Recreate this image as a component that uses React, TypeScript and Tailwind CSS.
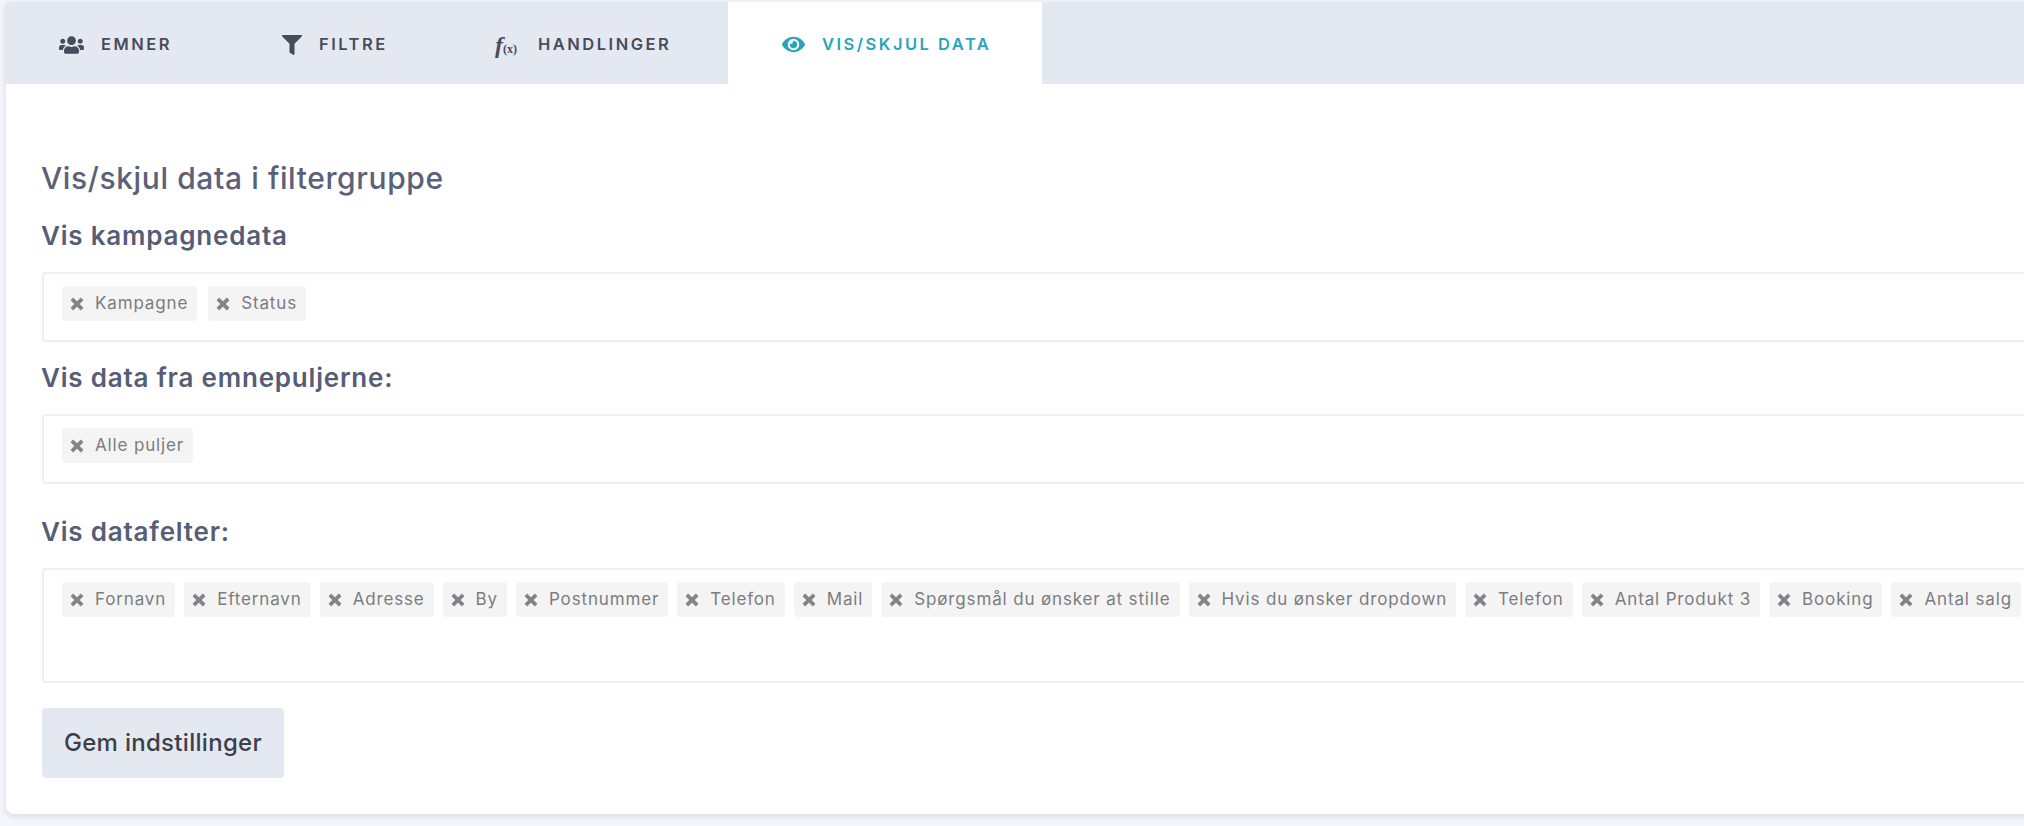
import { FaUsers, FaFilter, FaEye } from "react-icons/fa";

function Chip({ label }: { label: string }) {
  return (
    <span className="flex h-[35px] shrink-0 items-center gap-[10px] rounded-[4px] bg-[#f4f4f4] pl-[7px] pr-[9px] text-[17px] tracking-[0.85px] text-[#7c7c80]">
      <svg viewBox="0 0 14 14" className="h-[16px] w-[16px] text-[#848488]" fill="none" stroke="currentColor" strokeWidth="3.2">
        <path d="M2.5 2.5L11.5 11.5M11.5 2.5L2.5 11.5" />
      </svg>
      {label}
    </span>
  );
}

function Field({ h, gap, chips }: { h: string; gap: string; chips: string[] }) {
  return (
    <div className={`flex items-start rounded-[4px] border-2 border-[#eeeff2] bg-white pl-[18px] pt-[12px] ${gap} ${h}`}>
      {chips.map((c, i) => (
        <Chip key={i} label={c} />
      ))}
    </div>
  );
}

function Tab({ icon, label, w, active }: { icon: React.ReactNode; label: string; w: string; active?: boolean }) {
  return (
    <div className={`flex h-full items-center pt-[3px] ${w} ${active ? "bg-white text-[#27a5bd]" : "text-[#474b5a]"}`}>
      {icon}
      <span className="text-[16.5px] font-semibold tracking-[2.5px]">{label}</span>
    </div>
  );
}

export default function App() {
  return (
    <div className="h-[826px] w-[2024px] overflow-hidden bg-[#f5f6fb] pl-[6px] pt-[2px] font-['Inter',sans-serif]">
      <div className="h-[812px] w-[2100px] rounded-b-[8px] bg-white shadow-[0_2px_6px_rgba(120,130,160,0.25)]">
        <div className="flex h-[82px] bg-[#e4e8f1]">
          <Tab w="w-[222px] pl-[53px]" label="EMNER" icon={<FaUsers className="mr-[17px] h-[24px] w-[25px]" />} />
          <Tab w="w-[222px] pl-[54px]" label="FILTRE" icon={<FaFilter className="mr-[17px] h-[20px] w-[20px]" />} />
          <Tab
            w="w-[278px] pl-[45px]"
            label="HANDLINGER"
            icon={
              <span className="mr-[21px] flex items-baseline font-['Liberation_Serif',serif] font-bold">
                <span className="text-[24px] italic leading-none">f</span>
                <span className="text-[12px] leading-none">(x)</span>
              </span>
            }
          />
          <Tab w="w-[314px] pl-[54px]" active label="VIS/SKJUL DATA" icon={<FaEye className="mr-[17px] h-[23px] w-[23px]" />} />
        </div>
        <div className="pl-[36px] pt-[76px]">
          <h1 className="-ml-[1px] text-[30px] font-medium leading-[37px] tracking-[0.6px] text-[#5a6178]">Vis/skjul data i filtergruppe</h1>
          <h2 className="-ml-[1px] mt-[23px] text-[26px] font-semibold leading-[32px] tracking-[0.8px] text-[#565d75]">Vis kampagnedata</h2>
          <div className="mt-[20px]">
            <Field h="h-[70px]" gap="gap-[11px]" chips={["Kampagne", "Status"]} />
          </div>
          <h2 className="-ml-[1px] mt-[20px] text-[26px] font-semibold leading-[32px] tracking-[0.8px] text-[#565d75]">Vis data fra emnepuljerne:</h2>
          <div className="mt-[20px]">
            <Field h="h-[70px]" gap="gap-[11px]" chips={["Alle puljer"]} />
          </div>
          <h2 className="-ml-[1px] mt-[32px] text-[26px] font-semibold leading-[32px] tracking-[0.8px] text-[#565d75]">Vis datafelter:</h2>
          <div className="mt-[20px]">
            <Field
              h="h-[115px]"
              gap="gap-[9px]"
              chips={["Fornavn", "Efternavn", "Adresse", "By", "Postnummer", "Telefon", "Mail", "Spørgsmål du ønsker at stille", "Hvis du ønsker dropdown", "Telefon", "Antal Produkt 3", "Booking", "Antal salg"]}
            />
          </div>
          <button className="mt-[25px] h-[70px] w-[242px] rounded-[4px] bg-[#e4e8f1] text-[24px] font-medium tracking-[0.3px] text-[#3c3f4a]">Gem indstillinger</button>
        </div>
      </div>
    </div>
  );
}
